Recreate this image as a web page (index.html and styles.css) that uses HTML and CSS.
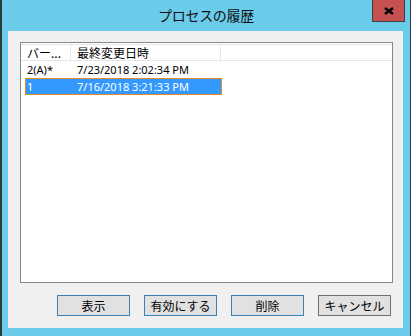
FILE: index.html
```html
<!DOCTYPE html>
<html lang="ja">
<head>
<meta charset="utf-8">
<link rel="stylesheet" href="styles.css">
</head>
<body>
<div class="window">
  <div class="titlebar">
    <span class="title">プロセスの履歴</span>
    <button class="close" aria-label="閉じる">
      <svg width="12" height="8" viewBox="0 0 12 8"><path d="M2 1 L10 7 M10 1 L2 7" stroke="#000" stroke-width="2.4" fill="none"/></svg>
    </button>
  </div>
  <div class="client">
    <div class="listbox">
      <div class="header">
        <div class="hcell c1">バー...</div>
        <div class="hcell c2">最終変更日時</div>
        <div class="hcell c3"></div>
      </div>
      <div class="row">
        <span class="cell c1">2(A)*</span>
        <span class="cell c2">7/23/2018 2:02:34 PM</span>
      </div>
      <div class="row selected">
        <span class="cell c1">1</span>
        <span class="cell c2">7/16/2018 3:21:33 PM</span>
      </div>
    </div>
    <div class="buttons">
      <button class="btn">表示</button>
      <button class="btn">有効にする</button>
      <button class="btn">削除</button>
      <button class="btn cancel">キャンセル</button>
    </div>
  </div>
</div>
</body>
</html>
```

FILE: styles.css
```css
* { box-sizing: border-box; }
html, body { margin: 0; padding: 0; }
body { width: 411px; height: 336px; overflow: hidden; }

.window {
  width: 411px;
  height: 336px;
  background: #6bcbea;
  border-left: 2px solid #2f3a3f;
  border-right: 1px solid #2f3a3f;
  display: flex;
  flex-direction: column;
  font-family: "Noto Sans CJK JP", sans-serif;
}

.titlebar {
  position: relative;
  height: 31px;
  display: flex;
  justify-content: center;
  align-items: center;
}
.title {
  font-size: 14px;
  letter-spacing: -0.3px;
  color: #111;
  line-height: 31px;
}
.close {
  position: absolute;
  top: 0;
  left: 370px;
  width: 33px;
  height: 22px;
  padding: 0;
  margin: 0;
  background: #c75050;
  border: 1px solid #3d3d3d;
  border-top: none;
  display: flex;
  align-items: center;
  justify-content: center;
}

.client {
  margin-left: 6px;
  width: 395px;
  height: 297px;
  background: #f0f0f0;
  display: flex;
  flex-direction: column;
  padding: 11px 10px 0 12px;
}

.listbox {
  width: 373px;
  height: 241px;
  background: #fff;
  border: 1px solid #828790;
  padding-top: 1px;
}

.header {
  display: flex;
  height: 17px;
}
.hcell {
  border-top: 1px solid #e5e5e5;
  border-bottom: 1px solid #e5e5e5;
  border-right: 1px solid #e5e5e5;
  font-size: 12px;
  line-height: 15px;
  color: #000;
  padding-left: 6px;
  white-space: nowrap;
  overflow: hidden;
}
.hcell.c1 { width: 50px; }
.hcell.c2 { width: 150px; }
.hcell.c3 { flex: 1; border-right: none; }

.row {
  display: flex;
  height: 17px;
  width: 197px;
  margin-left: 4px;
  align-items: center;
  font-family: "Noto Sans", "Noto Sans CJK JP", sans-serif;
  font-size: 11px;
  color: #000;
  border: 1px solid transparent;
}
.cell.c1 { width: 51px; padding-left: 1px; }
.cell.c2 { flex: 1; }
.row.selected {
  background: #3399ff;
  color: #fff;
  border: 1px solid #e8891e;
}

.buttons {
  display: flex;
  justify-content: flex-end;
  gap: 14px;
  margin-top: 12px;
  padding-right: 2px;
}
.btn {
  width: 73px;
  height: 21px;
  margin: 0;
  padding: 0;
  background: #e1e1e1;
  border: 1px solid #3c7fb1;
  font-family: "Noto Sans CJK JP", sans-serif;
  font-size: 12px;
  line-height: 19px;
  color: #000;
}
.btn.cancel { border-color: #707070; }
```
